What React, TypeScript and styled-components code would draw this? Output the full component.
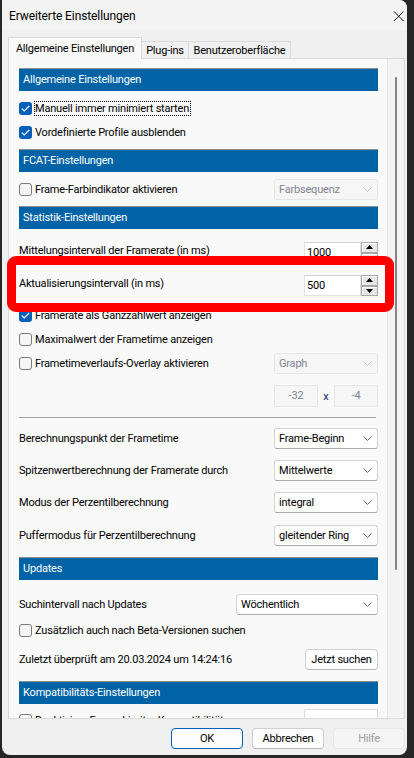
import React from 'react'
import styled, { createGlobalStyle, css } from 'styled-components'

const GlobalStyle = createGlobalStyle`
  html, body {
    margin: 0;
    padding: 0;
  }
  body {
    background: #262626;
    font-family: Roboto, "Liberation Sans", Arial, sans-serif;
    font-size: 11px;
    letter-spacing: -0.2px;
    color: #000;
  }
  * {
    box-sizing: border-box;
  }
`

const Desktop = styled.div`
  position: relative;
  width: 414px;
  height: 758px;
  overflow: hidden;
  background: #262626;
`

const Window = styled.div`
  margin-left: 2px;
  width: 405px;
  height: 755px;
  background: #f0f0f0;
  border-radius: 0 8px 8px 8px;
  display: flex;
  flex-direction: column;
  overflow: hidden;
`

const TitleBar = styled.div`
  height: 31px;
  flex-shrink: 0;
  display: flex;
  align-items: center;
  justify-content: space-between;
  padding: 0 2px 0 7px;
  background: #f3f3f3;
  font-size: 12px;
  letter-spacing: -0.1px;
`

const CloseIcon = styled.svg`
  display: block;
`

const TabStrip = styled.div`
  height: 27px;
  flex-shrink: 0;
  display: flex;
  align-items: flex-end;
  padding-left: 6px;
`

const Tab = styled.div<{ $active?: boolean; $w: number }>`
  width: ${(p) => p.$w}px;
  display: flex;
  align-items: center;
  justify-content: center;
  border: 1px solid #d9d9d9;
  border-bottom: none;
  ${(p) =>
    p.$active
      ? css`
          position: relative;
          z-index: 1;
          height: 22px;
          margin-bottom: -1px;
          padding-bottom: 1px;
          background: #f9f9f9;
        `
      : css`
          height: 17px;
          border-left: none;
          background: #f0f0f0;
        `}
`

const Panel = styled.div`
  margin-left: 6px;
  width: 397px;
  height: 661px;
  flex-shrink: 0;
  border: 1px solid #d9d9d9;
  background: #f9f9f9;
  display: flex;
`

const Content = styled.div`
  flex: 1;
  overflow: hidden;
  padding: 9px 9px 0 10px;
  display: flex;
  flex-direction: column;
`

const ScrollTrack = styled.div`
  width: 17px;
  border-left: 1px solid #e6e6e6;
  background: #f3f3f3;
  display: flex;
  justify-content: center;
`

const ScrollThumb = styled.div`
  width: 2px;
  height: 493px;
  margin-top: 18px;
  border-radius: 1px;
  background: #858585;
`

const SectionHeader = styled.div<{ $mt?: number }>`
  height: 23px;
  flex-shrink: 0;
  margin-top: ${(p) => p.$mt ?? 0}px;
  border-top: 1px solid #8c8c8c;
  background: #0063a6;
  color: #fff;
  padding-left: 4px;
  line-height: 21px;
`

const Row = styled.div<{ $h: number; $mt?: number }>`
  height: ${(p) => p.$h}px;
  flex-shrink: 0;
  margin-top: ${(p) => p.$mt ?? 0}px;
  display: flex;
  align-items: center;
  justify-content: space-between;
  white-space: nowrap;
`

const CheckWrap = styled.div`
  display: flex;
  align-items: center;
`

const Box = styled.span<{ $checked?: boolean }>`
  width: 13px;
  height: 13px;
  border-radius: 3px;
  margin-right: 2px;
  display: flex;
  align-items: center;
  justify-content: center;
  ${(p) =>
    p.$checked
      ? css`
          background: #005fb8;
        `
      : css`
          background: #f5f5f5;
          border: 1px solid #7c7c7c;
        `}
`

const CheckText = styled.span<{ $focus?: boolean }>`
  height: 15px;
  line-height: 13px;
  padding-right: 1px;
  border: 1px dotted ${(p) => (p.$focus ? '#000' : 'transparent')};
`

const Combo = styled.div<{ $w: number; $disabled?: boolean }>`
  width: ${(p) => p.$w}px;
  height: 21px;
  border-radius: 3px;
  display: flex;
  align-items: center;
  justify-content: space-between;
  padding: 0 5px 0 4px;
  ${(p) =>
    p.$disabled
      ? css`
          background: #f6f6f6;
          border: 1px solid #e6e6e6;
          color: #80848f;
        `
      : css`
          background: #fefefe;
          border: 1px solid #d3d3d3;
          border-bottom-color: #a9a9a9;
        `}
`

const Spin = styled.div`
  display: flex;
  margin-top: 4px;
`

const SpinField = styled.div`
  width: 57px;
  height: 21px;
  background: #fff;
  border: 1px solid #e2e2e2;
  border-top-color: #d0d0d0;
  padding-left: 2px;
  line-height: 19px;
`

const SpinButtons = styled.div`
  width: 17px;
  height: 21px;
  display: flex;
  flex-direction: column;
`

const SpinButton = styled.div`
  flex: 1;
  border: 1px solid #a8a8a8;
  background: #e6e6e6;
  box-shadow: inset 1px 1px 0 #fff;
  display: flex;
  align-items: center;
  justify-content: center;
`

const SizeGroup = styled.div`
  display: flex;
  align-items: center;
`

const SizeField = styled.div<{ $w?: number; $blank?: boolean }>`
  width: ${(p) => p.$w ?? 44}px;
  height: 22px;
  border: 1px solid ${(p) => (p.$blank ? '#dadada' : '#e6e6e6')};
  background: ${(p) => (p.$blank ? '#fff' : '#f6f6f6')};
  color: #80848f;
  text-align: center;
  line-height: 20px;
`

const Times = styled.span`
  width: 16px;
  text-align: center;
  color: #1a1a5a;
`

const Separator = styled.div`
  height: 1px;
  flex-shrink: 0;
  margin: 6px 2px 0 0;
  background: #a0a0a0;
`

const Button = styled.div<{ $w?: number; $variant?: 'default' | 'disabled' }>`
  width: ${(p) => p.$w ?? 72}px;
  height: 21px;
  border-radius: 4px;
  display: flex;
  align-items: center;
  justify-content: center;
  background: #fdfdfd;
  border: 1px solid #d0d0d0;
  border-bottom-color: #b8b8b8;
  ${(p) =>
    p.$variant === 'default' &&
    css`
      border: 1px solid #005fb8;
    `}
  ${(p) =>
    p.$variant === 'disabled' &&
    css`
      background: #f5f5f5;
      border: 1px solid #e5e5e5;
      color: #a0a0a0;
    `}
`

const ButtonBar = styled.div`
  margin-top: 9px;
  padding-right: 2px;
  display: flex;
  justify-content: flex-end;
  gap: 9px;
`

const Annotation = styled.div`
  position: absolute;
  left: 7px;
  top: 256px;
  width: 387px;
  height: 56px;
  border: 9px solid #ff0000;
  border-radius: 9px;
  pointer-events: none;
`

const Chevron = ({ disabled }: { disabled?: boolean }) => (
  <svg width="9" height="5" viewBox="0 0 9 5">
    <path d="M0.5 0.5 L4.5 4.5 L8.5 0.5" fill="none" stroke={disabled ? '#c4c4c4' : '#6a6a6a'} strokeWidth="1" />
  </svg>
)

const Arrow = ({ up }: { up?: boolean }) => (
  <svg width="7" height="4" viewBox="0 0 7 4">
    <path d={up ? 'M0 4 L3.5 0 L7 4 Z' : 'M0 0 L3.5 4 L7 0 Z'} fill="#000" />
  </svg>
)

const Check = ({ label, checked, focus }: { label: string; checked?: boolean; focus?: boolean }) => (
  <CheckWrap>
    <Box $checked={checked}>
      {checked && (
        <svg width="9" height="7" viewBox="0 0 9 7">
          <path d="M0.8 3.6 L3.2 6 L8.2 1" fill="none" stroke="#fff" strokeWidth="1.2" />
        </svg>
      )}
    </Box>
    <CheckText $focus={focus}>{label}</CheckText>
  </CheckWrap>
)

const Select = ({ value, w = 104, disabled }: { value: string; w?: number; disabled?: boolean }) => (
  <Combo $w={w} $disabled={disabled}>
    <span>{value}</span>
    <Chevron disabled={disabled} />
  </Combo>
)

const NumberBox = ({ value }: { value: string }) => (
  <Spin>
    <SpinField>{value}</SpinField>
    <SpinButtons>
      <SpinButton>
        <Arrow up />
      </SpinButton>
      <SpinButton>
        <Arrow />
      </SpinButton>
    </SpinButtons>
  </Spin>
)

export default function App() {
  return (
    <Desktop>
      <GlobalStyle />
      <Window>
        <TitleBar>
          <span>Erweiterte Einstellungen</span>
          <CloseIcon width="12" height="12" viewBox="0 0 12 12">
            <path d="M1 1.5 L10.5 11 M10.5 1.5 L1 11" stroke="#1a1a1a" strokeWidth="1" />
          </CloseIcon>
        </TitleBar>
        <TabStrip>
          <Tab $active $w={134}>
            Allgemeine Einstellungen
          </Tab>
          <Tab $w={47}>Plug-ins</Tab>
          <Tab $w={102}>Benutzeroberfläche</Tab>
        </TabStrip>
        <Panel>
          <Content>
            <SectionHeader>Allgemeine Einstellungen</SectionHeader>
            <Row $h={24} $mt={5}>
              <Check label="Manuell immer minimiert starten" checked focus />
            </Row>
            <Row $h={24}>
              <Check label="Vordefinierte Profile ausblenden" checked />
            </Row>

            <SectionHeader $mt={5}>FCAT-Einstellungen</SectionHeader>
            <Row $h={24} $mt={5}>
              <Check label="Frame-Farbindikator aktivieren" />
              <Select value="Farbsequenz" disabled />
            </Row>

            <SectionHeader $mt={5}>Statistik-Einstellungen</SectionHeader>
            <Row $h={33} $mt={5}>
              <span>Mittelungsintervall der Framerate (in ms)</span>
              <NumberBox value="1000" />
            </Row>
            <Row $h={33}>
              <span>Aktualisierungsintervall (in ms)</span>
              <NumberBox value="500" />
            </Row>
            <Row $h={24} $mt={3}>
              <Check label="Framerate als Ganzzahlwert anzeigen" checked />
            </Row>
            <Row $h={24}>
              <Check label="Maximalwert der Frametime anzeigen" />
            </Row>
            <Row $h={24}>
              <Check label="Frametimeverlaufs-Overlay aktivieren" />
              <Select value="Graph" disabled />
            </Row>
            <Row $h={30} $mt={6}>
              <span />
              <SizeGroup>
                <SizeField>-32</SizeField>
                <Times>x</Times>
                <SizeField>-4</SizeField>
              </SizeGroup>
            </Row>
            <Separator />
            <Row $h={32} $mt={4}>
              <span>Berechnungspunkt der Frametime</span>
              <Select value="Frame-Beginn" />
            </Row>
            <Row $h={32}>
              <span>Spitzenwertberechnung der Framerate durch</span>
              <Select value="Mittelwerte" />
            </Row>
            <Row $h={33}>
              <span>Modus der Perzentilberechnung</span>
              <Select value="integral" />
            </Row>
            <Row $h={32}>
              <span>Puffermodus für Perzentilberechnung</span>
              <Select value="gleitender Ring" />
            </Row>

            <SectionHeader $mt={6}>Updates</SectionHeader>
            <Row $h={32} $mt={8}>
              <span>Suchintervall nach Updates</span>
              <Select value="Wöchentlich" w={142} />
            </Row>
            <Row $h={20}>
              <Check label="Zusätzlich auch nach Beta-Versionen suchen" />
            </Row>
            <Row $h={30} $mt={4}>
              <span>Zuletzt überprüft am 20.03.2024 um 14:24:16</span>
              <Button $w={73}>Jetzt suchen</Button>
            </Row>

            <SectionHeader $mt={7}>Kompatibilitäts-Einstellungen</SectionHeader>
            <Row $h={24} $mt={4}>
              <Check label="Deaktiviere Frame-Limiter-Kompatibilität" />
              <SizeField $w={74} $blank />
            </Row>
          </Content>
          <ScrollTrack>
            <ScrollThumb />
          </ScrollTrack>
        </Panel>
        <ButtonBar>
          <Button $variant="default">OK</Button>
          <Button>Abbrechen</Button>
          <Button $variant="disabled">Hilfe</Button>
        </ButtonBar>
      </Window>
      <Annotation />
    </Desktop>
  )
}
